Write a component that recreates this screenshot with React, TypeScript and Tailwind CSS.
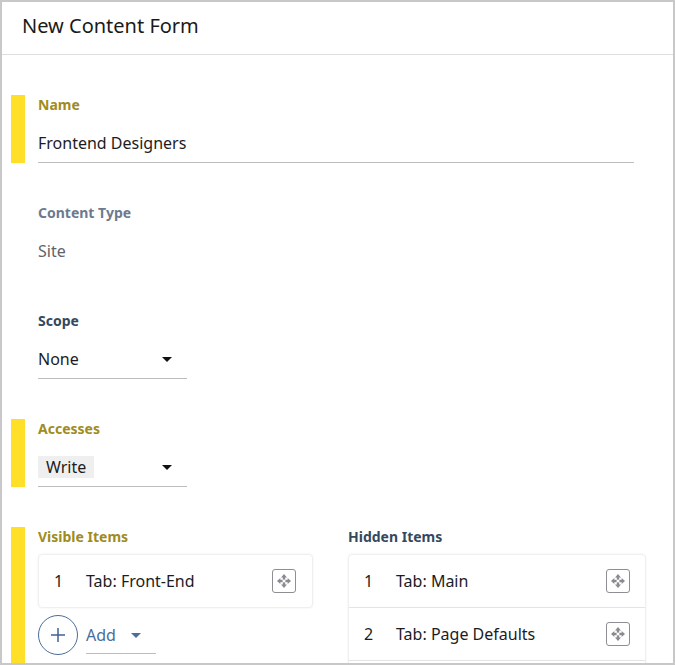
const font = { fontFamily: '"Noto Sans", sans-serif' };

function Caret({ className }: { className: string }) {
  return (
    <svg width="10" height="5" viewBox="0 0 10 5" className={className}>
      <path d="M0 0h10L5 5z" fill="currentColor" />
    </svg>
  );
}

function MoveIcon() {
  return (
    <span className="flex h-6 w-6 shrink-0 items-center justify-center rounded-[3px] border border-[#8e8e93]">
      <svg width="14" height="14" viewBox="0 0 14 14" fill="#8a8a91">
        <path d="M7 0 10 3.4H4z" />
        <path d="M7 14 4 10.6h6z" />
        <path d="M0 7 3.4 4v6z" />
        <path d="M14 7 10.6 10V4z" />
        <rect x="5.8" y="3" width="2.4" height="2.6" />
        <rect x="5.8" y="8.4" width="2.4" height="2.6" />
        <rect x="3" y="5.8" width="2.6" height="2.4" />
        <rect x="8.4" y="5.8" width="2.6" height="2.4" />
      </svg>
    </span>
  );
}

function Row({ n, label, border, h, pr }: { n: string; label: string; border?: boolean; h: string; pr: string }) {
  return (
    <div className={`flex items-center pl-[15px] text-[16px] text-[#1c1c1e] ${h} ${pr} ${border ? 'border-b border-[#e4e4e4]' : ''}`}>
      <span className="w-[32px] shrink-0">{n}</span>
      <span className="flex-1">{label}</span>
      <MoveIcon />
    </div>
  );
}

function Bar({ on }: { on?: boolean }) {
  return <div className={`w-[14px] shrink-0 ${on ? 'bg-[#ffdf28]' : ''}`} />;
}

function Section({ on, label, color, children }: { on?: boolean; label: string; color: string; children: React.ReactNode }) {
  return (
    <div className="flex h-[68px] gap-[13px]">
      <Bar on={on} />
      <div className="flex-1">
        <div className={`text-[14px] leading-[19px] font-bold ${color}`}>{label}</div>
        {children}
      </div>
    </div>
  );
}

function Select({ children }: { children: React.ReactNode }) {
  return (
    <div className="mt-[11px] flex h-[38px] w-[149px] items-start justify-between border-b border-[#bdbdbd] pt-[7px] pr-[15px] text-[16px] leading-[22px] text-[#1c1c1e]">
      {children}
      <Caret className="mt-[9px] text-[#111]" />
    </div>
  );
}

export default function App() {
  return (
    <div style={font} className="box-border flex h-[665px] w-[675px] flex-col overflow-hidden border-2 border-[#c8c8c8] bg-white">
      <div className="flex h-[53px] shrink-0 items-center border-b border-[#dedede] pb-[4px] pl-5 text-[20px] text-[#1a1a1a]">
        New Content Form
      </div>
      <div className="flex flex-col gap-10 pt-10 pl-[9px]">
        <Section on label="Name" color="text-[#a08c1e]">
          <div className="mt-[11px] h-[38px] w-[596px] border-b border-[#bdbdbd] pt-[7px] text-[16px] leading-[22px] text-[#1c1c1e]">
            Frontend Designers
          </div>
        </Section>
        <Section label="Content Type" color="text-[#6c7a90]">
          <div className="mt-[11px] pt-[7px] text-[16px] leading-[22px] text-[#5f6368]">Site</div>
        </Section>
        <Section label="Scope" color="text-[#34495e]">
          <Select>None</Select>
        </Section>
        <Section on label="Accesses" color="text-[#a08c1e]">
          <Select>
            <span className="bg-[#efefef] px-2">Write</span>
          </Select>
        </Section>
        <div className="flex h-[140px] gap-[13px]">
          <Bar on />
          <div className="w-[275px] shrink-0">
            <div className="text-[14px] leading-[19px] font-bold text-[#a08c1e]">Visible Items</div>
            <div className="mt-[8px] rounded-sm border border-[#efefef] shadow-[0_0_2px_rgba(0,0,0,0.08)]">
              <Row n="1" label="Tab: Front-End" h="h-[52px]" pr="pr-4" />
            </div>
            <div className="mt-[7px] flex items-start gap-2">
              <span className="flex h-10 w-10 items-center justify-center rounded-full border border-[#4a6d9a]">
                <svg width="16" height="16" viewBox="0 0 16 16" stroke="#3f6391" strokeWidth="1.5">
                  <path d="M8 1v14M1 8h14" />
                </svg>
              </span>
              <div className="mt-[1px] flex h-[38px] w-[70px] items-start justify-between border-b border-[#bdbdbd] pt-[8px] pr-[15px] text-[16px] leading-[22px] text-[#4a6d9a]">
                Add
                <Caret className="mt-[9px] text-[#4a6d9a]" />
              </div>
            </div>
          </div>
          <div className="ml-[22px] w-[298px] shrink-0">
            <div className="text-[14px] leading-[19px] font-bold text-[#34495e]">Hidden Items</div>
            <div className="mt-[8px] rounded-sm border border-[#efefef] shadow-[0_0_2px_rgba(0,0,0,0.08)]">
              <Row n="1" label="Tab: Main" border h="h-[53px]" pr="pr-[15px]" />
              <Row n="2" label="Tab: Page Defaults" border h="h-[53px]" pr="pr-[15px]" />
              <div className="h-[53px]" />
            </div>
          </div>
        </div>
      </div>
    </div>
  );
}
